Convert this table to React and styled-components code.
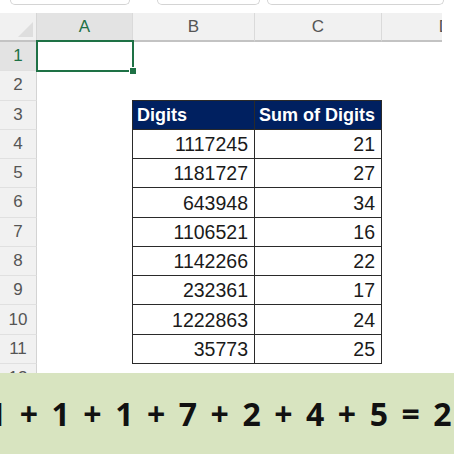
import React from "react";
import styled, { createGlobalStyle } from "styled-components";

const GlobalStyle = createGlobalStyle`
  html, body {
    margin: 0;
    padding: 0;
    background: #ffffff;
  }
  body {
    font-family: "Liberation Sans", Arial, sans-serif;
  }
`;

const Page = styled.div`
  width: 454px;
  height: 454px;
  overflow: hidden;
  display: flex;
  flex-direction: column;
  background: #ffffff;
`;

const TabStrip = styled.div`
  height: 13px;
  flex: none;
  display: flex;
  align-items: flex-start;
`;

const Tab = styled.div`
  margin-left: ${(p) => p.gap}px;
  width: ${(p) => p.w}px;
  height: 4px;
  border: 1px solid #d4d4d4;
  border-top: none;
  border-radius: 0 0 5px 5px;
  background: #ffffff;
`;

const SheetArea = styled.div`
  width: 442px;
  height: 360px;
  flex: none;
  overflow: hidden;
`;

const Grid = styled.div`
  display: grid;
  grid-template-columns: 37px 96px 122px 127px 127px;
  grid-auto-rows: 29.27px;
  grid-template-rows: 29px;
  position: relative;
`;

const Corner = styled.div`
  background: #f1f1f1;
  border-right: 1px solid #d6d6d6;
  border-bottom: 2px solid #c3c3c3;
  box-sizing: border-box;
  position: relative;

  &::after {
    content: "";
    position: absolute;
    right: 3px;
    bottom: 3px;
    width: 0;
    height: 0;
    border-left: 15px solid transparent;
    border-bottom: 15px solid #dedede;
  }
`;

const ColHead = styled.div`
  background: ${(p) => (p.active ? "#e3e3e3" : "#f1f1f1")};
  color: ${(p) => (p.active ? "#1e7145" : "#555555")};
  border-right: 1px solid #dadada;
  border-bottom: 2px solid ${(p) => (p.active ? "#1e7145" : "#c3c3c3")};
  box-sizing: border-box;
  display: flex;
  align-items: center;
  justify-content: center;
  font-size: 17px;
  padding-top: 1px;
  overflow: hidden;
`;

const RowHead = styled.div`
  background: ${(p) => (p.active ? "#e3e3e3" : "#f1f1f1")};
  color: ${(p) => (p.active ? "#1e7145" : "#555555")};
  border-right: 1px solid ${(p) => (p.active ? "#1e7145" : "#d3d3d3")};
  border-bottom: 1px solid #e0e0e0;
  box-sizing: border-box;
  display: flex;
  align-items: center;
  justify-content: center;
  font-size: 17px;
`;

const Cell = styled.div`
  box-sizing: border-box;
  display: flex;
  align-items: flex-end;
  justify-content: ${(p) => (p.left ? "flex-start" : "flex-end")};
  padding: ${(p) => (p.left ? "0 0 3px 4px" : "0 6px 2px 0")};
  background: ${(p) => (p.head ? "#002060" : "#ffffff")};
  color: ${(p) => (p.head ? "#ffffff" : "#1a1a1a")};
  font-size: ${(p) => (p.head ? "18px" : "19.5px")};
  font-weight: ${(p) => (p.head ? 700 : 400)};
  white-space: nowrap;
  border-right: ${(p) => (p.boxed ? "1px solid #2a2a2a" : "none")};
  border-bottom: ${(p) => (p.boxed ? "1px solid #2a2a2a" : "none")};
  border-left: ${(p) => (p.first ? "1px solid #2a2a2a" : "none")};
  border-top: ${(p) => (p.top ? "1px solid #2a2a2a" : "none")};
  margin-left: ${(p) => (p.first ? "-1px" : "0")};
  margin-top: ${(p) => (p.top ? "-1px" : "0")};
`;

const Selection = styled.div`
  position: absolute;
  left: 36px;
  top: 27px;
  width: 98px;
  height: 32px;
  border: 2px solid #1e7145;
  box-sizing: border-box;
  pointer-events: none;

  &::after {
    content: "";
    position: absolute;
    right: -5px;
    bottom: -5px;
    width: 6px;
    height: 6px;
    background: #1e7145;
    border: 1px solid #ffffff;
  }
`;

const Band = styled.div`
  flex: 1;
  background: #d8e4c0;
  display: flex;
  align-items: center;
  justify-content: center;
  overflow: hidden;
  padding-bottom: 1px;
`;

const Formula = styled.div`
  font-family: "Open Sans", "Noto Sans", sans-serif;
  font-weight: 700;
  font-size: 32px;
  letter-spacing: 2.6px;
  color: #111111;
  white-space: nowrap;
  flex: none;
  padding-left: 9px;
`;

const data = [
  [1117245, 21],
  [1181727, 27],
  [643948, 34],
  [1106521, 16],
  [1142266, 22],
  [232361, 17],
  [1222863, 24],
  [35773, 25],
];

export default function App() {
  const rows = [];
  for (let r = 1; r <= 12; r++) {
    const isHead = r === 3;
    const item = r >= 4 && r <= 11 ? data[r - 4] : null;
    const boxed = r >= 3 && r <= 11;
    rows.push(
      <React.Fragment key={r}>
        <RowHead active={r === 1}>{r}</RowHead>
        <Cell />
        {boxed ? (
          <>
            <Cell boxed first top={isHead} head={isHead} left={isHead}>
              {isHead ? "Digits" : item[0]}
            </Cell>
            <Cell boxed top={isHead} head={isHead} left={isHead}>
              {isHead ? "Sum of Digits" : item[1]}
            </Cell>
          </>
        ) : (
          <>
            <Cell />
            <Cell />
          </>
        )}
        <Cell />
      </React.Fragment>
    );
  }

  return (
    <Page>
      <GlobalStyle />
      <TabStrip>
        <Tab gap={10} w={118} />
        <Tab gap={27} w={101} />
        <Tab gap={7} w={175} />
      </TabStrip>
      <SheetArea>
        <Grid>
          <Corner />
          <ColHead active>A</ColHead>
          <ColHead>B</ColHead>
          <ColHead>C</ColHead>
          <ColHead>D</ColHead>
          {rows}
          <Selection />
        </Grid>
      </SheetArea>
      <Band>
        <Formula>1 + 1 + 1 + 7 + 2 + 4 + 5 = 21</Formula>
      </Band>
    </Page>
  );
}
